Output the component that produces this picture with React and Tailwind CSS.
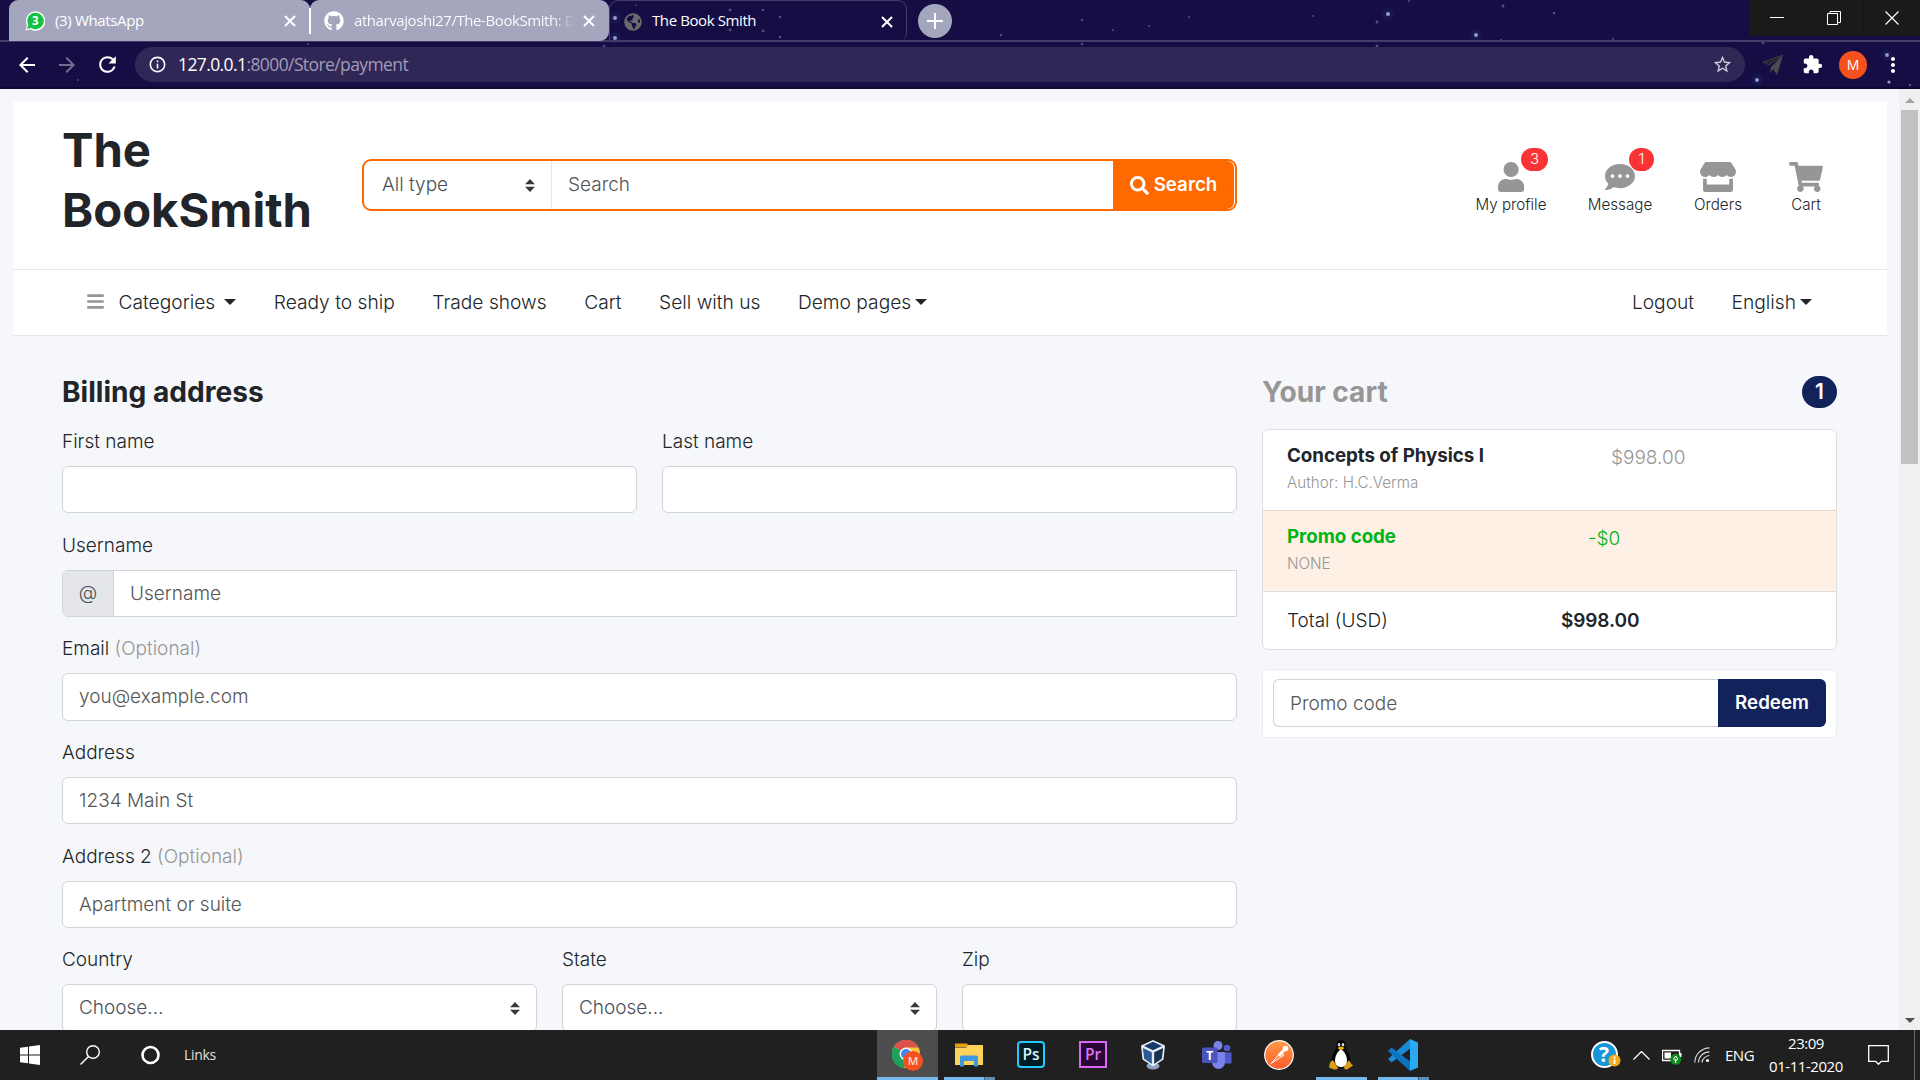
import React from "react";
import { FaUser, FaCommentDots, FaStore, FaShoppingCart, FaSearch, FaGithub, FaGlobeAmericas, FaBars } from "react-icons/fa";
import { MdArrowBack, MdArrowForward, MdRefresh, MdStarBorder, MdExtension, MdMoreVert, MdInfoOutline } from "react-icons/md";

const STARS = [
  [308, 44, 1], [600, 26, 1.2], [603, 25, 1.2], [615, 18, 2], [615, 38, 2], [604, 46, 1.2],
  [636, 5, 0.8], [485, 40, 1.2], [730, 10, 1.4], [763, 10, 1.3], [780, 17, 1.3], [730, 30, 1.4], [763, 31, 1.4], [780, 37, 1.3],
  [1001, 35, 1.2], [1082, 20, 1.2], [1082, 44, 1.3], [1113, 30, 1], [1149, 26, 1], [1189, 17, 1],
  [1313, 16, 0.9], [1388, 14, 2], [1377, 22, 1.5], [1377, 46, 1.5], [1409, 1, 1], [1476, 35, 2], [1503, 6, 1.5], [1554, 13, 1.3],
  [1501, 40, 1], [1613, 39, 1], [1763, 43, 1.3], [1757, 80, 1.9], [1887, 55, 1.9], [1889, 82, 1.6], [1910, 85, 1.3], [78, 80, 0.9],
];

function Starfield() {
  return (
    <svg className="pointer-events-none absolute inset-0" width="1920" height="89">
      {STARS.map(([x, y, r], i) => (
        <g key={i}>
          {r > 1.8 && <circle cx={x} cy={y} r={r * 3} fill="#2a4a90" opacity="0.16" />}
          <circle cx={x} cy={y} r={r} fill="#a9b4e6" opacity={r > 1.5 ? 0.85 : 0.4} />
        </g>
      ))}
    </svg>
  );
}

function Close({ className = "" }) {
  return (
    <svg className={className} width="12" height="12" viewBox="0 0 12 12" stroke="#fff" strokeWidth="2">
      <path d="M1 1l10 10M11 1L1 11" />
    </svg>
  );
}

function Browser() {
  return (
    <div className="relative h-[89px] border-b-2 border-[#0d0630] bg-[#160d45] text-white font-['Open_Sans','Noto_Sans',sans-serif]">
      <Starfield />
      <div className="relative flex h-[42px] border-b-2 border-[#453c6c]">
        <div className="ml-[9px] flex h-[41px] w-[301px] items-center rounded-t-[9px] bg-[#a4a6be] pl-[16px] pr-[14px]">
          <svg width="20" height="20" viewBox="0 0 20 20">
            <path d="M0.5 19.5L2 14.5A9.7 9.7 0 1 1 5.5 18.3Z" fill="#fff" />
            <path d="M2 18L3.4 14A8.2 8.2 0 1 1 6 16.8Z" fill="#13c143" />
            <text x="10.3" y="14" fontSize="11.5" fontWeight="700" fill="#fff" textAnchor="middle">3</text>
          </svg>
          <span className="ml-[10px] pb-px text-[15px] tracking-[-0.35px]">(3) WhatsApp</span>
          <Close className="ml-auto" />
        </div>
        <div className="flex h-[41px] w-[299px] items-center rounded-t-[9px] rounded-br-[9px] bg-[#a4a6be] pr-[14px]">
          <div className="-ml-px h-[26px] w-[2px] bg-white" />
          <FaGithub size={20} className="ml-[13px]" />
          <span className="ml-[10px] bg-linear-to-r from-white from-90% to-white/0 bg-clip-text pb-px text-[15px] tracking-[-0.42px] whitespace-nowrap text-transparent">atharvajoshi27/The-BookSmith: D</span>
          <Close className="ml-auto" />
        </div>
        <div className="flex h-[42px] w-[298px] items-center rounded-t-[9px] rounded-br-[9px] border border-b-0 border-[#453c6c] pl-[14px] pr-[13px]">
          <FaGlobeAmericas size={18} className="text-[#6b6b6e]" />
          <span className="ml-[10px] pb-[2px] text-[15px] tracking-[-0.4px]">The Book Smith</span>
          <Close className="ml-auto" />
        </div>
        <div className="ml-[11px] mt-[4px] flex size-[34px] items-center justify-center rounded-full bg-[#a4a6be]">
          <svg width="16" height="16" viewBox="0 0 16 16" stroke="#fff" strokeWidth="2"><path d="M8 0v16M0 8h16" /></svg>
        </div>
        <div className="ml-auto flex h-[36px] w-[171px] gap-px">
          <div className="flex flex-1 items-center justify-center bg-[#1a1a1a]">
            <svg width="14" height="14" stroke="#fff"><path d="M0 6.5h14" /></svg>
          </div>
          <div className="flex flex-1 items-center justify-center bg-[#1a1a1a]">
            <svg width="14" height="14" fill="none" stroke="#fff"><path d="M0.5 2.5h10v11h-10zM3 2.500V.5h10.500V11.500H11" /></svg>
          </div>
          <div className="flex flex-1 items-center justify-center bg-[#1a1a1a]">
            <svg width="14" height="14" stroke="#fff" strokeWidth="1.2"><path d="M.5.5l13 13M13.500.5l-13 13" /></svg>
          </div>
        </div>
      </div>
      <div className="relative flex h-[45px] items-center">
        <MdArrowBack size={24} className="ml-[15px]" />
        <MdArrowForward size={24} className="ml-[16px] text-[#746e92]" />
        <MdRefresh size={25} className="ml-[16px]" />
        <div className="ml-[15px] flex h-[35px] w-[1610px] items-center rounded-full bg-[#302756] pl-[13px] pr-[12px]">
          <MdInfoOutline size={19} />
          <span className="ml-[11px] text-[17.500px] tracking-[-0.6px]">127.0.0.1<span className="text-[#a19cb8]">:8000/Store/payment</span></span>
          <MdStarBorder size={21} className="ml-auto text-[#cdcbd6]" />
        </div>
        <svg className="ml-[17px]" width="22" height="22" viewBox="0 0 22 22">
          <path d="M21 1L1 8l6 3z" fill="#26243a" stroke="#3a3a42" /><path d="M21 1L9 13l-1 6 3-4 4 6z" fill="#4b4b50" />
        </svg>
        <MdExtension size={21} className="ml-[18px]" />
        <div className="ml-[16px] flex size-[28px] items-center justify-center rounded-full bg-[#f4511e] text-[14px]">M</div>
        <MdMoreVert size={24} className="ml-[14px]" />
      </div>
    </div>
  );
}

function Caret({ className = "" }) {
  return <svg className={className} width="12" height="6" viewBox="0 0 12 6"><path d="M0 0h12L6 6z" fill="#212529" /></svg>;
}

function SelectArrows() {
  return <svg width="10" height="13" viewBox="0 0 10 13"><path d="M5 0L10 5.300H0zM5 13L0 7.700h10z" fill="#343a40" /></svg>;
}

function HeaderIcon({ icon: Icon, label, badge, width, iconWidth, badgeClass = "" }) {
  return (
    <div className={`relative flex flex-col items-center ${width}`}>
      <Icon className={`h-[30px] text-[#969696] ${iconWidth}`} />
      <span className="mt-[3px] whitespace-nowrap text-[15.2px] leading-[19px] font-light">{label}</span>
      {badge && (
        <span className={`absolute -top-[14px] left-1/2 flex h-[23px] items-center justify-center rounded-full bg-[#fa3434] text-[15px] font-light text-white ${badgeClass}`}>{badge}</span>
      )}
    </div>
  );
}

function StoreHeader() {
  return (
    <header className="mx-[13px] mr-[12px] mt-[13px] bg-white">
      <div className="flex h-[168px] items-start border-b border-[#e4e7ea] pl-[49px] pr-[50px]">
        <h1 className="mt-[18px] w-[300px] text-[47.200px] leading-[60px] font-bold">The<br />BookSmith</h1>
        <div className="mt-[57px] flex h-[52px] w-[875px] items-stretch rounded-[9px] border-2 border-[#ff6a00]">
          <div className="flex w-[188px] items-center justify-between border-r border-[#e4e7ea] pl-[18px] pr-[16px] font-light text-[#495057]">
            All type <SelectArrows />
          </div>
          <div className="flex flex-1 items-center pl-[16px] font-light text-[#555]">Search</div>
          <div className="mr-px flex w-[121px] items-center justify-center gap-[5px] rounded-r-[7px] bg-[#ff6a00] text-[18.75px] font-semibold text-white">
            <FaSearch size={19} /> Search
          </div>
        </div>
        <div className="mt-[60px] ml-auto flex pr-[14px]">
          <HeaderIcon icon={FaUser} label="My profile" badge="3" width="w-[70px] mr-[42px]" iconWidth="w-[26.25px]" badgeClass="w-[27px] ml-[10px]" />
          <HeaderIcon icon={FaCommentDots} label="Message" badge="1" width="w-[64px] mr-[42px]" iconWidth="w-[30px]" badgeClass="w-[25px] ml-[9px]" />
          <HeaderIcon icon={FaStore} label="Orders" width="w-[48px] mr-[47px]" iconWidth="w-[36px]" />
          <HeaderIcon icon={FaShoppingCart} label="Cart" width="w-[34px]" iconWidth="w-[34px]" />
        </div>
      </div>
      <nav className="flex h-[66px] items-center border-b border-[#e4e7ea] pb-[1px] pl-[73px] pr-[75px] font-light">
        <FaBars size={19} className="mb-[2px] text-[#969696]" />
        <span className="ml-[13.500px] text-[19.2px]">Categories</span><Caret className="ml-[9px] mr-[37.500px]" />
        <span className="mr-[37.500px] text-[19.2px]">Ready to ship</span>
        <span className="mr-[37.500px] text-[19.2px]">Trade shows</span>
        <span className="mr-[37.500px] text-[19.2px]">Cart</span>
        <span className="mr-[37.500px] text-[19.2px]">Sell with us</span>
        <span className="text-[19.2px]">Demo pages</span><Caret className="ml-[4px]" />
        <span className="ml-auto mr-[37.500px] text-[19.2px]">Logout</span>
        <span className="text-[19.2px]">English</span><Caret className="ml-[4px]" />
      </nav>
    </header>
  );
}

function Field({ label, optional, placeholder, select, prefix, className = "" }) {
  return (
    <div className={`h-[103.700px] ${className}`}>
      <div className="h-[38px] leading-[28.600px] font-light">
        {label}{optional && <span className="text-[#969696]"> (Optional)</span>}
      </div>
      <div className={`flex h-[47.500px] items-center overflow-hidden border border-[#ced4da] bg-white ${prefix ? "rounded-l-[6px]" : "rounded-[6px]"}`}>
        {prefix && <div className="flex h-full w-[51px] items-center justify-center border-r border-[#ced4da] bg-[#e4e6ea] font-light text-[#495057]">{prefix}</div>}
        <span className={`pt-px pl-[16px] font-light ${select ? "text-[#495057]" : "text-[#555]"}`}>{placeholder}</span>
        {select && <span className="ml-auto mr-[16px]"><SelectArrows /></span>}
      </div>
    </div>
  );
}

function Billing() {
  return (
    <section className="w-[1175px]">
      <h4 className="h-[50px] text-[28.100px] leading-[34px] font-bold">Billing address</h4>
      <div className="mt-[2.900px] grid grid-cols-2 gap-x-[25px]">
        <Field label="First name" />
        <Field label="Last name" />
      </div>
      <Field label="Username" placeholder="Username" prefix="@" />
      <Field label="Email" optional placeholder="you@example.com" />
      <Field label="Address" placeholder="1234 Main St" />
      <Field label="Address 2" optional placeholder="Apartment or suite" />
      <div className="flex gap-[25px]">
        <Field label="Country" placeholder="Choose..." select className="w-[475px]" />
        <Field label="State" placeholder="Choose..." select className="w-[375px]" />
        <Field label="Zip" className="w-[275px]" />
      </div>
    </section>
  );
}

function Cart() {
  return (
    <aside className="ml-[25px] w-[575px]">
      <div className="flex h-[54px] items-start justify-between">
        <h4 className="text-[28.100px] leading-[34px] font-bold text-[#969696]">Your cart</h4>
        <span className="mt-px flex h-[32px] w-[35px] items-center justify-center rounded-full bg-[#12225b] text-[21px] font-semibold text-white">1</span>
      </div>
      <div className="overflow-hidden rounded-[6px] border border-[#dfdfdf] bg-white">
        <div className="flex h-[81px] border-b border-[#e4d3c8] pl-[24px]">
          <div className="w-[324px] pt-[14px]">
            <div className="text-[18.75px] leading-[24px] font-bold tracking-[-0.04px]">Concepts of Physics I</div>
            <div className="mt-[3px] text-[15.2px] leading-[24px] font-light text-[#969696]">Author: H.C.Verma</div>
          </div>
          <span className="pt-[14px] leading-[28px] font-light text-[#969696]">$998.00</span>
        </div>
        <div className="flex h-[81px] border-b border-[#dfdfdf] bg-[#fff0e5] pl-[24px] text-[#00b517]">
          <div className="w-[301px] pt-[14px]">
            <div className="text-[18.75px] leading-[24px] font-bold tracking-[-0.04px]">Promo code</div>
            <div className="mt-[3px] text-[15.2px] leading-[24px] font-light text-[#969696]">NONE</div>
          </div>
          <span className="pt-[14px] leading-[28px] font-light">-$0</span>
        </div>
        <div className="flex h-[57px] items-center pt-px pl-[24px]">
          <span className="w-[274px] font-light">Total (USD)</span>
          <span className="font-semibold tracking-[-0.1px]">$998.00</span>
        </div>
      </div>
      <div className="mt-[19px] rounded-[5px] border border-[#ebecee] bg-white p-[10px] pt-[9px]">
        <div className="flex h-[48px]">
          <div className="flex flex-1 items-center rounded-l-[6px] border border-r-0 border-[#ced4da] pt-[2px] pl-[16px] font-light text-[#555]">Promo code</div>
          <div className="flex w-[108px] items-center justify-center rounded-r-[6px] bg-[#12225b] text-[18.75px] font-semibold text-white">Redeem</div>
        </div>
      </div>
    </aside>
  );
}

function Scrollbar() {
  return (
    <div className="flex h-[941px] w-[21px] flex-col items-center bg-[#f0f0f0]">
      <svg className="mt-[9px]" width="10" height="5"><path d="M0 5L5 0l5 5z" fill="#a3a3a3" /></svg>
      <div className="mt-[7px] h-[354px] w-[17px] bg-[#c1c1c1]" />
      <svg className="mt-auto mb-[7px]" width="10" height="5"><path d="M0 0l5 5 5-5z" fill="#505050" /></svg>
    </div>
  );
}

function ChromeIcon() {
  return (
    <svg width="32" height="32" viewBox="0 0 32 32">
      <circle cx="14" cy="15" r="14" fill="#fbc934" />
      <path d="M14 15L2 7.500A14 14 0 0 1 26.500 8.500H14z" fill="#d9534a" />
      <path d="M14 15L2 7.500A14 14 0 0 0 12 29L17 19z" fill="#1aa260" />
      <circle cx="14" cy="15" r="6.500" fill="#fff" /><circle cx="14" cy="15" r="5" fill="#4285f4" />
      <circle cx="21" cy="22" r="10" fill="#f4511e" />
      <text x="21" y="26.200" fontSize="11.500" fontWeight="600" textAnchor="middle" fill="#ffd9cc">M</text>
    </svg>
  );
}

function FolderIcon() {
  return (
    <svg width="28" height="24" viewBox="0 0 28 24">
      <path d="M0 .5h12l1 1.500v2H0z" fill="#e5a00d" /><path d="M0 4.500h11l2.500-2.500H28v20H0z" fill="#fdd35c" />
      <path d="M5 23.500V14q0-1.500 1.500-1.500h15q1.500 0 1.500 1.500v9.500h-4V18h-10v5.500z" fill="#3f97dd" />
    </svg>
  );
}

function AdobeIcon({ label, stroke, fill, text, round }) {
  return (
    <svg width="28" height="27" viewBox="0 0 28 27">
      <rect x="1" y="1" width="26" height="25" rx={round} fill={fill} stroke={stroke} strokeWidth="2" />
      <text x="14" y="18.700" fontSize="15.500" fontWeight="600" textAnchor="middle" fill={text}>{label}</text>
    </svg>
  );
}

function VirtualBoxIcon() {
  return (
    <svg width="26" height="30" viewBox="0 0 26 30">
      <ellipse cx="13" cy="26" rx="6.500" ry="3.500" fill="#8fa3c6" />
      <path d="M13 0L25 5.500 23.500 19.500 13 26.500 2.500 19.500 1 5.500z" fill="#e6edf7" />
      <path d="M13 1.800L22 6 13 10.300 4 6z" fill="#183a66" />
      <path d="M2.800 8l9 4.300v11.700L4.200 18.700z" fill="#2c5b93" /><path d="M23.200 8l-9 4.300v11.700l7.600-5.300z" fill="#17304f" />
    </svg>
  );
}

function TeamsIcon() {
  return (
    <svg width="30" height="28" viewBox="0 0 30 28">
      <circle cx="25" cy="7" r="3.300" fill="#5059c9" /><circle cx="16" cy="4.500" r="4.500" fill="#7b83eb" />
      <path d="M20 11.500h9.500v11h-7z" fill="#5059c9" /><path d="M10 11h13v10.500a6.500 6.500 0 0 1-13 0z" fill="#7b83eb" />
      <rect y="6.500" width="15.500" height="15.500" rx="1.500" fill="#4b53bc" />
      <text x="7.800" y="18.500" fontSize="12" fontWeight="700" textAnchor="middle" fill="#fff">T</text>
    </svg>
  );
}

function PostmanIcon() {
  return (
    <svg width="30" height="30" viewBox="0 0 30 30">
      <defs><linearGradient id="pm" x2="0" y2="1"><stop stopColor="#ff9a4a" /><stop offset="1" stopColor="#ff5a2c" /></linearGradient></defs>
      <circle cx="15" cy="15" r="14.300" fill="url(#pm)" stroke="#fff" strokeWidth="1.200" />
      <path d="M7 23.500L17 12.500l3 2.500z" fill="none" stroke="#fff" strokeWidth="1" />
      <path d="M13.500 15l5-5.500 2.500 1.500-5 6z" fill="#fff" /><circle cx="21.500" cy="8.500" r="2.800" fill="#fff" />
    </svg>
  );
}

function TuxIcon() {
  return (
    <svg width="24" height="30" viewBox="0 0 24 30">
      <path d="M12 0c3.500 0 4.500 2.500 4.500 6 0 4 5 8.500 5 15 0 4-3 7-9.500 7s-9.500-3-9.500-7c0-6.500 5-11 5-15C7.500 2.500 8.500 0 12 0z" fill="#050505" />
      <path d="M12 9.500c3 1 6 6.500 6 11 0 4-2 6.500-6 6.500s-6-2.500-6-6.500c0-4.500 3-10 6-11z" fill="#fff" />
      <ellipse cx="10" cy="4.800" rx="1.300" ry="1.800" fill="#ddd" /><ellipse cx="14" cy="4.800" rx="1.300" ry="1.800" fill="#ddd" />
      <path d="M8.500 8q3.500-3 7 0-3.500 4-7 0z" fill="#f0b50e" />
      <path d="M4 20l5 8q-1 2-4 1.500L0 27.500l1-5zM20 20l-5 7q0 3 3 2.500l6-4-2-2z" fill="#d9a012" />
    </svg>
  );
}

function VSCodeIcon() {
  return (
    <svg width="30" height="32" viewBox="0 0 30 32">
      <path d="M22 0L0 20l3.500 3.500L23 9z" fill="#1b8ad6" /><path d="M22 32L0 12l3.500-3.500L23 23z" fill="#0f74bd" />
      <path d="M22 0l8 3.500v25L22 32z" fill="#2aa8f2" />
    </svg>
  );
}

function Task({ children, active, bar, split, nudge = "" }) {
  return (
    <div className={`flex h-full w-[61px] flex-col items-center ${active ? "bg-[#4d4d4d]" : ""}`}>
      <div className={`flex flex-1 items-center pt-[2px] ${nudge}`}>{children}</div>
      <div className={`flex h-[3px] ${active ? "w-full" : "w-[51px]"}`}>
        {bar && <div className="flex-1 bg-[#76b9ed]" />}
        {split && <div className="w-[11px] border-l border-[#3f6585] bg-[#5b8fb8]" />}
      </div>
    </div>
  );
}

function Taskbar() {
  return (
    <div className="flex h-[50px] items-center bg-[#202020] text-white font-['Open_Sans','Noto_Sans',sans-serif]">
      <div className="flex w-[877px] items-center">
        <svg className="ml-[20px]" width="20" height="20" viewBox="0 0 20 20" fill="#fff"><path d="M0 2.800l8-1.100v7.800H0zM9 1.500L20 0v9.500H9zM0 10.500h8v7.800l-8-1.100zM9 10.500h11V20L9 18.500z" /></svg>
        <svg className="ml-[40px]" width="20" height="20" viewBox="0 0 20 20" fill="none" stroke="#fff" strokeWidth="1.400"><circle cx="13" cy="7" r="6.300" /><path d="M8.500 11.500L.5 19.500" /></svg>
        <svg className="ml-[41px]" width="19" height="20" viewBox="0 0 19 20" fill="none" stroke="#fff" strokeWidth="2.600"><circle cx="9.500" cy="10" r="8" /></svg>
        <span className="ml-[24px] pb-[2px] text-[14px] tracking-[-0.3px] text-[#e0e0e0]">Links</span>
      </div>
      <div className="flex h-full gap-px">
        <Task active bar><ChromeIcon /></Task>
        <Task bar split nudge="pr-px"><FolderIcon /></Task>
        <Task nudge="pr-px"><AdobeIcon label="Ps" stroke="#26c9ff" fill="#001d26" text="#d8f5ff" round="3" /></Task>
        <Task nudge="pr-[2px]"><AdobeIcon label="Pr" stroke="#d868f5" fill="#2a0634" text="#dd74f7" round="0" /></Task>
        <Task nudge="pr-[5px]"><VirtualBoxIcon /></Task>
        <Task nudge="pr-[2px]"><TeamsIcon /></Task>
        <Task nudge="pr-[2px]"><PostmanIcon /></Task>
        <Task bar nudge="pr-[2px]"><TuxIcon /></Task>
        <Task bar split nudge="pr-[2px]"><VSCodeIcon /></Task>
      </div>
      <div className="ml-auto flex h-full items-center">
        <svg width="30" height="28" viewBox="0 0 30 28">
          <circle cx="13.500" cy="13.500" r="12.500" fill="#1496d8" stroke="#fff" strokeWidth="2" />
          <text x="13" y="21" fontSize="21" fontWeight="700" textAnchor="middle" fill="#fff">?</text>
          <circle cx="23.500" cy="19.500" r="6" fill="#f5a91d" /><path d="M23.500 15.500v2M23.500 18.500v4.500" stroke="#fff" strokeWidth="2" />
        </svg>
        <svg className="ml-[12px]" width="17" height="9" fill="none" stroke="#fff" strokeWidth="1.300"><path d="M.5 8.500l8-8 8 8" /></svg>
        <svg className="ml-[12px] mt-[4px]" width="20" height="16" viewBox="0 0 20 16">
          <path d="M.5 1.500h17v10H.5z" fill="none" stroke="#fff" strokeWidth="1.300" /><path d="M2.500 3.500h6.500v6H2.500zM18 4h1.500v4H18z" fill="#fff" />
          <circle cx="13.700" cy="10.300" r="5.500" fill="#0f8a1b" /><path d="M13.700 7l2 3-2 2-2-2zM13.700 10v4" fill="none" stroke="#fff" />
        </svg>
        <svg className="ml-[12px]" width="16" height="16" viewBox="0 0 16 16" fill="none" stroke="#d6d6d6" strokeWidth="1.200">
          <path d="M.8 15.500A15 15 0 0 1 15.500.8M4.500 15.500A11 11 0 0 1 15.500 4.800M8 15.500A8 8 0 0 1 15.500 8.500" /><circle cx="13.500" cy="13.500" r="1.600" fill="#fff" stroke="none" />
        </svg>
        <span className="ml-[15px] w-[29px] text-[15px] tracking-[-0.500px]">ENG</span>
        <div className="ml-[12px] w-[80px] text-center text-[15px] leading-[23px] tracking-[-0.45px] whitespace-nowrap"><div>23:09</div><div>01-11-2020</div></div>
        <svg className="ml-[22px]" width="21" height="20" viewBox="0 0 21 20" fill="none" stroke="#fff" strokeWidth="1.300"><path d="M.7.7h19.600v15.600h-7l-2.800 3-2.800-3h-7z" /></svg>
        <div className="ml-[25px] mr-[5px] h-full w-px bg-[#6a6a6a]" />
      </div>
    </div>
  );
}

export default function App() {
  return (
    <div className="h-[1080px] w-[1920px] overflow-hidden bg-[#f5f7fa] text-[19px] text-[#212529] font-['Inter',sans-serif]">
      <Browser />
      <div className="flex h-[941px] overflow-hidden">
        <div className="w-[1899px]">
          <StoreHeader />
          <div className="flex pl-[62px] pt-[39px]">
            <Billing />
            <Cart />
          </div>
        </div>
        <Scrollbar />
      </div>
      <Taskbar />
    </div>
  );
}
